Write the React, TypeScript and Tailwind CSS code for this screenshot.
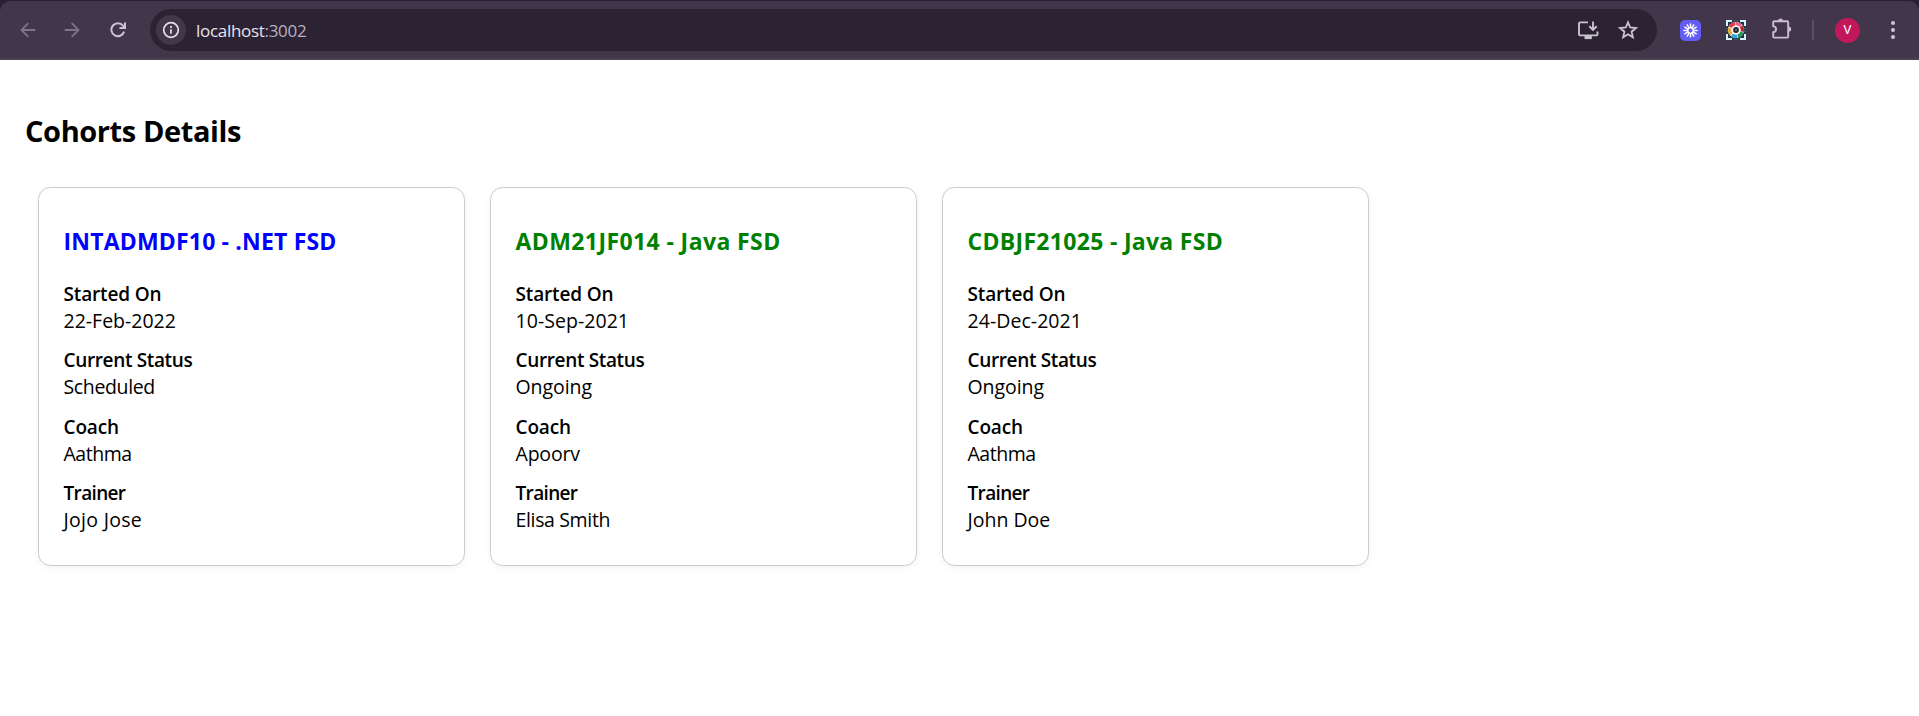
import React from "react";

type Field = { label: string; labelClass: string; value: string; valueClass: string };
type Cohort = { title: string; titleClass: string; fields: Field[] };

const STARTED = { label: "Started On", labelClass: "tracking-[-0.15px]" };
const STATUS = { label: "Current Status", labelClass: "tracking-[-0.35px]" };
const COACH = { label: "Coach", labelClass: "tracking-[-0.15px]" };
const TRAINER = { label: "Trainer", labelClass: "tracking-[-0.65px]" };

const cohorts: Cohort[] = [
  {
    title: "INTADMDF10 - .NET FSD",
    titleClass: "text-[#0000ff] tracking-[0.18px]",
    fields: [
      { ...STARTED, value: "22-Feb-2022", valueClass: "" },
      { ...STATUS, value: "Scheduled", valueClass: "tracking-[-0.36px]" },
      { ...COACH, value: "Aathma", valueClass: "tracking-[-0.48px]" },
      { ...TRAINER, value: "Jojo Jose", valueClass: "tracking-[0.29px]" },
    ],
  },
  {
    title: "ADM21JF014 - Java FSD",
    titleClass: "text-[#008000] tracking-[0.4px]",
    fields: [
      { ...STARTED, value: "10-Sep-2021", valueClass: "tracking-[0.05px]" },
      { ...STATUS, value: "Ongoing", valueClass: "tracking-[-0.05px]" },
      { ...COACH, value: "Apoorv", valueClass: "tracking-[-0.2px]" },
      { ...TRAINER, value: "Elisa Smith", valueClass: "tracking-[-0.35px]" },
    ],
  },
  {
    title: "CDBJF21025 - Java FSD",
    titleClass: "text-[#008000] tracking-[0.3px]",
    fields: [
      { ...STARTED, value: "24-Dec-2021", valueClass: "tracking-[0.05px]" },
      { ...STATUS, value: "Ongoing", valueClass: "tracking-[-0.05px]" },
      { ...COACH, value: "Aathma", valueClass: "tracking-[-0.48px]" },
      { ...TRAINER, value: "John Doe", valueClass: "" },
    ],
  },
];

function ArrowIcon({ className = "" }: { className?: string }) {
  return (
    <svg viewBox="0 0 16 16" className={`size-4 shrink-0 ${className}`} fill="none" stroke="#7f7389" strokeWidth="1.8">
      <path d="M15.3 8H1.8M8.3 1.2 1.5 8l6.8 6.8" />
    </svg>
  );
}

function ReloadIcon() {
  return (
    <svg viewBox="0 0 16 16" className="size-4 shrink-0" fill="none" stroke="#cdc0d8" strokeWidth="2">
      <path d="M14.1 9.6A6.5 6.5 0 1 1 13 3.7L14.6 5.6" />
      <path d="M15 .5v5.4H9.5" />
    </svg>
  );
}

function InfoIcon() {
  return (
    <svg viewBox="0 0 18 18" className="size-[18px]" fill="none" stroke="#e6dfea" strokeWidth="1.7">
      <circle cx="9" cy="9" r="7.3" />
      <path d="M9 8.2v4.6M9 5v1.9" />
    </svg>
  );
}

function InstallIcon() {
  return (
    <svg viewBox="0 0 22 20" className="h-5 w-[22px] shrink-0" fill="none" stroke="#c9c3ce" strokeWidth="1.9">
      <path d="M11 2.4H3.2A1.2 1.2 0 0 0 2 3.6v10.6a1.2 1.2 0 0 0 1.2 1.2h16.1a1.2 1.2 0 0 0 1.2-1.2V11.6" />
      <path d="M16 1.5v8M12.3 6.2 16 9.8l3.7-3.6" />
      <path d="M7.5 15.4h7.3v3.7H7.5z" fill="#c9c3ce" stroke="none" />
    </svg>
  );
}

function StarIcon() {
  return (
    <svg viewBox="0 0 20 20" className="size-5 shrink-0" fill="none" stroke="#c9c3ce" strokeWidth="1.8" strokeLinejoin="miter">
      <path d="m10 2.3 2.2 5.2 5.7.5-4.3 3.7 1.3 5.6-4.9-3-4.9 3 1.3-5.6L2.1 8l5.7-.5z" />
    </svg>
  );
}

function BurstIcon() {
  return (
    <svg viewBox="0 0 21 21" className="size-[21px] shrink-0">
      <rect width="21" height="21" rx="5" fill="#625df5" />
      <g stroke="#fff" strokeWidth="1.5" strokeLinecap="round">
        {[0, 30, 60, 90, 120, 150, 180, 210, 240, 270, 300, 330].map((a) => (
          <path key={a} d="M10.5 7.6V3.9" transform={`rotate(${a} 10.5 10.5)`} />
        ))}
      </g>
      <circle cx="10.5" cy="10.5" r="2.8" fill="none" stroke="#fff" strokeWidth="1.2" />
    </svg>
  );
}

function CaptureIcon() {
  return (
    <svg viewBox="0 0 20 20" className="size-5 shrink-0" fill="none">
      <rect x="1" y="1" width="18" height="18" fill="#20343f" />
      <path d="M1 6V1h5M14 1h5v5M19 14v5h-5M6 19H1v-5" stroke="#d5f6fb" strokeWidth="2" />
      <path d="M8 1h4M8 19h4M1 8v4M19 8v4" stroke="#3a8295" strokeWidth="1" strokeDasharray="1.5 1" />
      <circle cx="10" cy="10" r="8" fill="#fff" />
      <g strokeWidth="3.4">
        <path d="M4.2 7.2A6.3 6.3 0 0 1 9.3 3.7" stroke="#e5394b" />
        <path d="M9.7 3.7a6.3 6.3 0 0 1 5 2.1" stroke="#ee5a86" />
        <path d="M15 6.2a6.3 6.3 0 0 1 1.1 5.4" stroke="#b82731" />
        <path d="M15.9 12.2a6.3 6.3 0 0 1-4.3 3.9" stroke="#28965a" />
        <path d="M11 16.2a6.3 6.3 0 0 1-5-1.4" stroke="#27a5e5" />
        <path d="M5.5 14.4A6.3 6.3 0 0 1 3.9 8" stroke="#e9ad3c" />
      </g>
      <circle cx="10" cy="10" r="4.6" fill="#f4f4f4" />
      <circle cx="10" cy="10" r="2.9" fill="#26282d" />
      <circle cx="10" cy="10" r="1.1" fill="#777" />
    </svg>
  );
}

function PuzzleIcon() {
  return (
    <svg viewBox="0 0 21 22" className="h-[22px] w-[21px] shrink-0" fill="none">
      <path
        d="M3.2 4.2h13a1 1 0 0 1 1 1v14.4a1 1 0 0 1-1 1h-13a1 1 0 0 1-1-1v-4.3c3.8-.6 3.8-5.6 0-6.2V5.2a1 1 0 0 1 1-1z"
        stroke="#cdb9d9"
        strokeWidth="1.9"
      />
      <path d="M7 4a2.5 2.5 0 0 1 5 0zM17.6 9.4a2.6 2.6 0 0 1 0 5.2z" fill="#cdb9d9" />
    </svg>
  );
}

function MenuIcon() {
  return (
    <svg viewBox="0 0 6 20" className="h-5 w-1.5 shrink-0" fill="#d0c3da">
      <circle cx="3" cy="3" r="2" />
      <circle cx="3" cy="10" r="2" />
      <circle cx="3" cy="17" r="2" />
    </svg>
  );
}

function Toolbar() {
  return (
    <header className="h-[60px] bg-[#2b1f33] pt-px">
      <div className="flex h-[59px] items-center rounded-t-[10px] border-b-2 border-[#4b4151] bg-[#42374a] pl-5 pr-[23px] pt-px">
        <ArrowIcon />
        <ArrowIcon className="ml-7 rotate-180" />
        <div className="ml-[30px]">
          <ReloadIcon />
        </div>
        <div className="ml-6 flex h-[42px] w-[1507px] items-center rounded-full bg-[#2b2233] pl-1.5 pr-[19px]">
          <span className="flex size-[30px] items-center justify-center rounded-full bg-[#42374a]">
            <InfoIcon />
          </span>
          <span className="ml-2.5 flex-1 whitespace-nowrap pt-0.5 text-[17px] leading-6 tracking-[-0.3px] text-[#e9e3ed]">
            localhost<span className="text-[#b9b0c0]">:3002</span>
          </span>
          <InstallIcon />
          <div className="ml-[19px]">
            <StarIcon />
          </div>
        </div>
        <div className="ml-[23px] flex items-center">
          <BurstIcon />
          <div className="ml-[25px]">
            <CaptureIcon />
          </div>
          <div className="mb-1 ml-[25px]">
            <PuzzleIcon />
          </div>
          <span className="ml-5 h-5 w-0.5 bg-[#5c5066]" />
          <span className="ml-[21px] flex size-[25px] items-center justify-center rounded-full bg-[#c2185b] font-['Roboto',sans-serif] text-[13px] text-white">
            V
          </span>
        </div>
        <div className="ml-auto">
          <MenuIcon />
        </div>
      </div>
    </header>
  );
}

function CohortCard({ cohort }: { cohort: Cohort }) {
  return (
    <article className="h-[379px] w-[427px] rounded-[12.5px] border border-[#cccccc] pl-[24.5px] pr-6 pt-[37px] shadow-[0_2px_6px_rgba(0,0,0,0.05)]">
      <h3 className={`mb-6 whitespace-nowrap text-[23px] font-bold leading-8 ${cohort.titleClass}`}>{cohort.title}</h3>
      <dl className="flex flex-col gap-[13.33px]">
        {cohort.fields.map((field) => (
          <div key={field.label}>
            <dt className={`text-[19px] font-semibold leading-[27px] ${field.labelClass}`}>{field.label}</dt>
            <dd className={`text-[19.5px] leading-[26px] ${field.valueClass}`}>{field.value}</dd>
          </div>
        ))}
      </dl>
    </article>
  );
}

export default function App() {
  return (
    <div className="min-h-screen bg-white font-['Open_Sans',sans-serif] text-black">
      <Toolbar />
      <main className="px-[25px] pt-[51px]">
        <h2 className="text-[29px] font-bold leading-10 tracking-[-0.4px]">Cohorts Details</h2>
        <div className="ml-[13px] mt-9 flex gap-[25px]">
          {cohorts.map((cohort) => (
            <CohortCard key={cohort.title} cohort={cohort} />
          ))}
        </div>
      </main>
    </div>
  );
}
